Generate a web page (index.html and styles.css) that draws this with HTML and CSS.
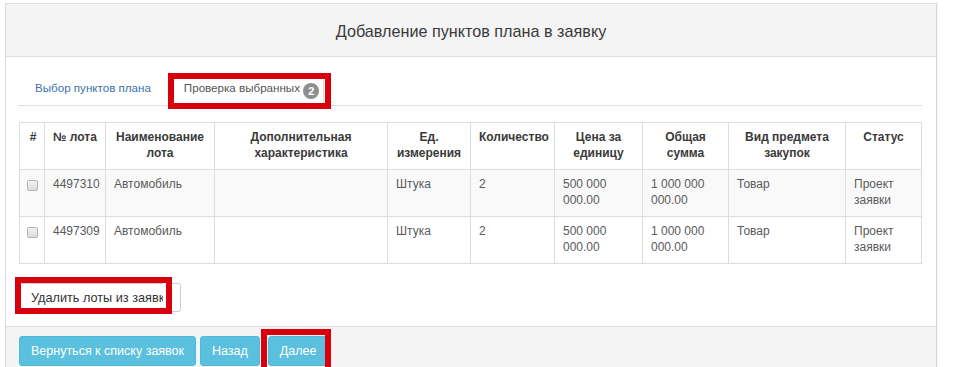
FILE: index.html
```html
<!DOCTYPE html>
<html lang="ru">
<head>
  <meta charset="UTF-8" />
  <title>Добавление пунктов плана в заявку</title>
  <link rel="stylesheet" href="styles.css">
</head>
<body>
  <div class="panel">
    <div class="panel-heading">Добавление пунктов плана в заявку</div>

    <div class="panel-body">
      <ul class="tabs">
        <li><a href="#">Выбор пунктов плана</a></li>
        <li class="active marked"><a href="#">Проверка выбранных <span class="badge">2</span></a></li>
      </ul>

      <table class="lots">
        <colgroup>
          <col style="width:25px"><col style="width:61px"><col style="width:109px"><col style="width:173px">
          <col style="width:83px"><col style="width:84px"><col style="width:88px"><col style="width:86px">
          <col style="width:117px"><col style="width:76px">
        </colgroup>
        <thead>
          <tr>
            <th>#</th>
            <th>№ лота</th>
            <th>Наименование лота</th>
            <th>Дополнительная характеристика</th>
            <th>Ед. измерения</th>
            <th>Количество</th>
            <th>Цена за единицу</th>
            <th>Общая сумма</th>
            <th>Вид предмета закупок</th>
            <th>Статус</th>
          </tr>
        </thead>
        <tbody>
          <tr>
            <td><input type="checkbox" class="check"></td>
            <td>4497310</td>
            <td>Автомобиль</td>
            <td></td>
            <td>Штука</td>
            <td>2</td>
            <td>500 000 000.00</td>
            <td>1 000 000 000.00</td>
            <td>Товар</td>
            <td>Проект заявки</td>
          </tr>
          <tr>
            <td><input type="checkbox" class="check"></td>
            <td>4497309</td>
            <td>Автомобиль</td>
            <td></td>
            <td>Штука</td>
            <td>2</td>
            <td>500 000 000.00</td>
            <td>1 000 000 000.00</td>
            <td>Товар</td>
            <td>Проект заявки</td>
          </tr>
        </tbody>
      </table>

      <div class="marked delete-wrap">
        <button class="btn btn-default">Удалить лоты из заявки</button>
      </div>
    </div>

    <div class="panel-footer">
      <button class="btn btn-info">Вернуться к списку заявок</button>
      <button class="btn btn-info">Назад</button>
      <span class="marked next-wrap"><button class="btn btn-info">Далее</button></span>
    </div>
  </div>
</body>
</html>
```

FILE: styles.css
```css
body {
  margin: 0;
  padding: 3px 0 0 5px;
  font-family: 'Liberation Sans', Arial, sans-serif;
  color: #333;
  background: #fff;
}
.panel {
  width: 930px;
  border: 1px solid #ddd;
  border-right-color: #d6d6d6;
  box-shadow: 1px 0 1px rgba(0,0,0,0.04);
}
.panel-heading {
  height: 52px;
  line-height: 54px;
  text-align: center;
  font-size: 16.2px;
  color: #3a3a3a;
  background: #f4f4f4;
  border-bottom: 1px solid #ddd;
}
.panel-body {
  padding: 17px 14px 14px 13px;
}

/* tabs */
.tabs {
  list-style: none;
  margin: 0 0 16px -1px;
  padding: 0;
  display: flex;
  border-bottom: 1px solid #ddd;
  height: 31px;
}
.tabs li {
  margin-bottom: -1px;
}
.tabs a {
  display: block;
  padding: 0 16px 3px;
  line-height: 26px;
  font-size: 11.6px;
  color: #3a73b0;
  text-decoration: none;
  border: 1px solid transparent;
  border-radius: 3px 3px 0 0;
}
.tabs .active a {
  color: #555;
  background: #fff;
  border-color: #ddd #ddd transparent;
  padding: 0 4px 3px 15px;
}
.badge {
  display: inline-block;
  min-width: 16px;
  height: 16px;
  line-height: 16px;
  border-radius: 8px;
  background: #8f8f8f;
  color: #fff;
  font-size: 11px;
  font-weight: bold;
  text-align: center;
  vertical-align: -3px;
}

/* table */
.lots {
  width: 902px;
  table-layout: fixed;
  border-collapse: collapse;
  font-size: 12px;
  line-height: 15.5px;
}
.lots th,
.lots td {
  border: 1px solid #ddd;
  padding: 7px 8px 8px;
  vertical-align: top;
}
.lots th {
  height: 31px;
  text-align: center;
  font-weight: bold;
  color: #3a3a3a;
}
.lots td {
  color: #5a5a5a;
  height: 31px;
}
.lots th:first-child,
.lots td:first-child {
  padding-left: 6px;
  padding-right: 4px;
}
.lots tbody tr:nth-child(odd) td { background: #f9f9f9; }
.check {
  appearance: none;
  width: 11px;
  height: 11px;
  margin: 3px 0 0 1px;
  border: 1px solid #b5b5b5;
  border-radius: 2px;
  background: linear-gradient(#f2f2f2, #dcdcdc);
  vertical-align: top;
}

/* buttons */
.btn {
  font-family: inherit;
  font-size: 12.5px;
  height: 29px;
  padding: 0 11px;
  border-radius: 3px;
  border: 1px solid transparent;
  cursor: pointer;
}
.btn-default {
  background: #fff;
  color: #333;
  border-color: #ccc;
  width: 162px;
  text-align: left;
  overflow: hidden;
  white-space: nowrap;
  font-size: 12.7px;
}
.btn-info {
  background: #5bc0de;
  border-color: #4fbbdb;
  color: #fff;
}
.delete-wrap {
  margin-top: 19px;
  width: 162px;
}
.panel-footer {
  background: #f4f4f4;
  border-top: 1px solid #ddd;
  padding: 9px 13px 8px;
  display: flex;
  gap: 4px;
}
.panel-footer .btn { height: 30px; }

/* red annotation frames */
.marked {
  position: relative;
}
.marked::after {
  content: "";
  position: absolute;
  border: 6px solid #d8000c;
  pointer-events: none;
}
.tabs .marked::after {
  left: 0;
  top: -1px;
  width: 151px;
  height: 24px;
}
.delete-wrap::after {
  left: -4px;
  top: -6px;
  width: 145px;
  height: 25px;
  background: linear-gradient(to right, transparent 142px, #fff 142px);
}
.next-wrap {
  display: inline-block;
  margin-left: 4px;
}
.next-wrap::after {
  left: -7px;
  top: -7px;
  width: 58px;
  height: 35px;
}
```
